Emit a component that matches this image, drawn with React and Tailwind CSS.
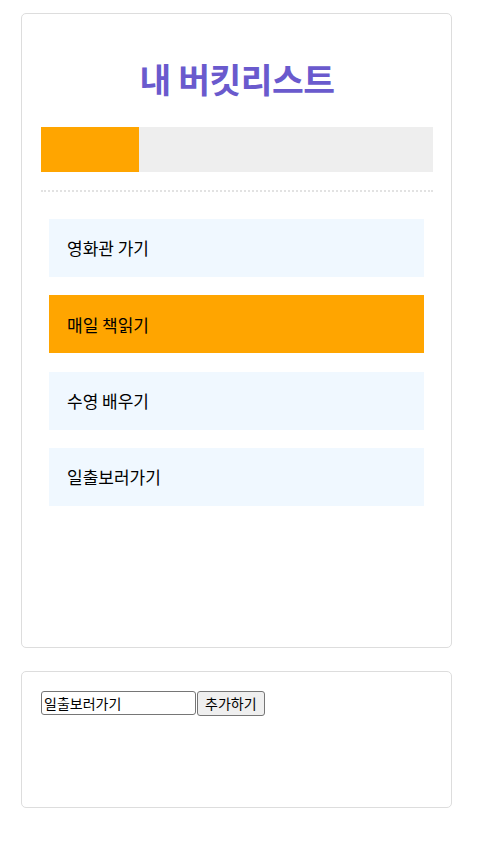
import { useState } from "react";

const items = [
  { text: "영화관 가기", done: false },
  { text: "매일 책읽기", done: true },
  { text: "수영 배우기", done: false },
  { text: "일출보러가기", done: false },
];

export default function App() {
  const [value, setValue] = useState("일출보러가기");

  return (
    <div className="min-h-screen bg-white font-['Noto_Sans_CJK_KR',sans-serif] text-black pt-[13px]">
      <div className="ml-[21px] w-[431px] h-[635px] border border-[#ddd] rounded-[5px] pl-[19px] pr-[18px] box-border">
        <h1 className="text-center text-[34.5px] font-bold text-[#6a5acd] mt-[40px] leading-[48px] tracking-[-0.5px]">
          내 버킷리스트
        </h1>
        <div className="mt-[25px] h-[45px] bg-[#eee]">
          <div className="h-full w-[25%] bg-[#ffa500]" />
        </div>
        <div className="mt-[18px] h-[3px] border-t-2 border-dotted border-[#e2e2e2]" />
        <div className="ml-[8px] mr-[9px] mt-[26px] flex flex-col gap-[18.4px]">
          {items.map((item) => (
            <div
              key={item.text}
              className={
                item.done
                  ? "h-[58px] flex items-center px-[18px] text-[17px] bg-[#ffa500]"
                  : "h-[58px] flex items-center px-[18px] text-[17px] bg-[#f0f8ff]"
              }
            >
              {item.text}
            </div>
          ))}
        </div>
      </div>

      <div className="ml-[21px] mt-[23px] w-[431px] h-[137px] border border-[#ddd] rounded-[5px] px-[19px] pt-[19px] box-border">
        <div className="flex items-start">
          <input
            value={value}
            onChange={(e) => setValue(e.target.value)}
            className="w-[155px] h-[24px] px-[2px] text-[14px] border border-[#767676] rounded-[3px] outline-none"
          />
          <button className="ml-[1px] h-[25px] px-[7px] text-[14px] bg-[#efefef] border border-[#767676] rounded-[3px]">
            추가하기
          </button>
        </div>
      </div>
    </div>
  );
}
